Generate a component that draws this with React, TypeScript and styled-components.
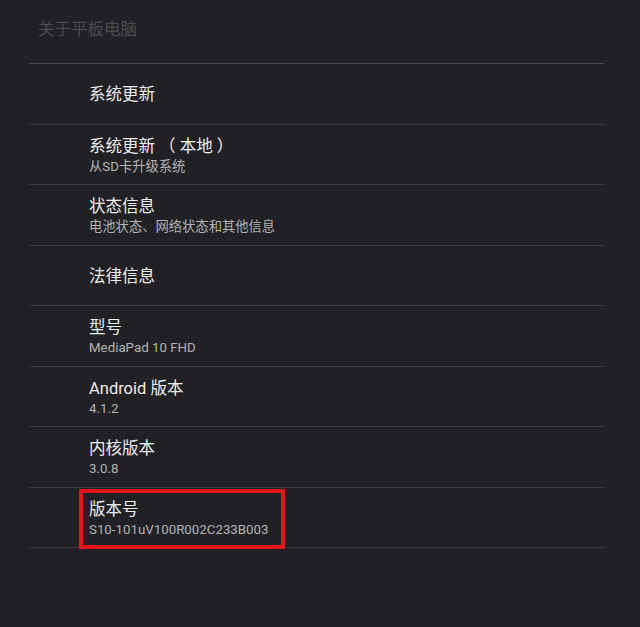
import React from 'react';
import styled, { createGlobalStyle } from 'styled-components';

const GlobalStyle = createGlobalStyle`
  html, body {
    margin: 0;
    padding: 0;
    background: #212125;
  }
  body {
    font-family: "Roboto", "Noto Sans CJK SC", sans-serif;
  }
`;

type Item = { title: string; summary?: string; marked?: boolean };

const items: Item[] = [
  { title: '系统更新' },
  { title: '系统更新 （ 本地 ）', summary: '从SD卡升级系统' },
  { title: '状态信息', summary: '电池状态、网络状态和其他信息' },
  { title: '法律信息' },
  { title: '型号', summary: 'MediaPad 10 FHD' },
  { title: 'Android 版本', summary: '4.1.2' },
  { title: '内核版本', summary: '3.0.8' },
  { title: '版本号', summary: 'S10-101uV100R002C233B003', marked: true },
];

const Page = styled.div`
  width: 640px;
  height: 627px;
  background: #212125;
  padding-left: 29px;
  box-sizing: border-box;
  overflow: hidden;
`;

const Header = styled.div`
  width: 575px;
  height: 64px;
  box-sizing: border-box;
  border-bottom: 1px solid #4a4a4e;
  padding-left: 9px;
  display: flex;
  align-items: flex-start;
  padding-top: 19px;
`;

const HeaderTitle = styled.span`
  font-size: 16.5px;
  line-height: 22px;
  color: #4b4b4f;
`;

const List = styled.div`
  width: 575px;
  display: flex;
  flex-direction: column;
`;

const Row = styled.div`
  position: relative;
  height: 60.5px;
  box-sizing: border-box;
  border-bottom: 1px solid #3a3a3e;
  padding-left: 60px;
  padding-top: 3px;
  display: flex;
  flex-direction: column;
  justify-content: center;
`;

const Title = styled.div`
  font-size: 16.5px;
  line-height: 22px;
  color: #ededed;
  white-space: pre;
`;

const Summary = styled.div`
  font-size: 13.3px;
  line-height: 18px;
  color: #b3b3b3;
`;

const Marker = styled.div`
  position: absolute;
  left: 50px;
  top: 1px;
  width: 206px;
  height: 60px;
  box-sizing: border-box;
  border: 4px solid #e8141d;
  pointer-events: none;
`;

export default function App() {
  return (
    <>
      <GlobalStyle />
      <Page>
        <Header>
          <HeaderTitle>关于平板电脑</HeaderTitle>
        </Header>
        <List>
          {items.map((item) => (
            <Row key={item.title}>
              <Title>{item.title}</Title>
              {item.summary && <Summary>{item.summary}</Summary>}
              {item.marked && <Marker />}
            </Row>
          ))}
        </List>
      </Page>
    </>
  );
}
